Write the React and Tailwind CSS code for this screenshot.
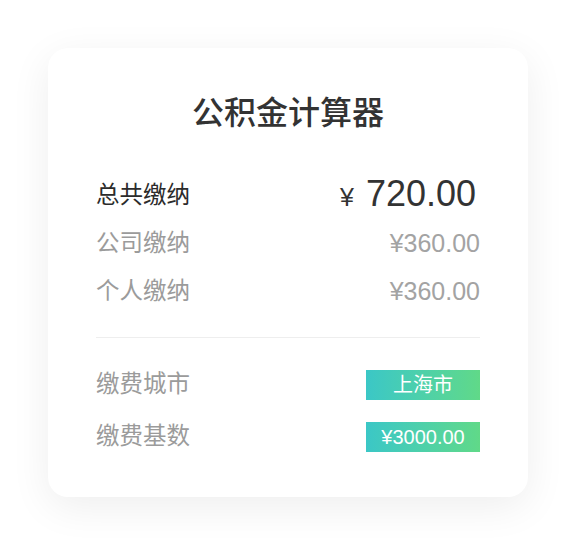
const rows = [
  { label: '公司缴纳', value: '¥360.00' },
  { label: '个人缴纳', value: '¥360.00' },
];

const settings = [
  { label: '缴费城市', value: '上海市' },
  { label: '缴费基数', value: '¥3000.00' },
];

export default function App() {
  return (
    <div
      className="w-[576px] h-[546px] bg-white pt-12 px-12"
      style={{ fontFamily: '"Liberation Sans", "Noto Sans CJK SC", sans-serif' }}
    >
      <div className="w-[480px] h-[449px] bg-white rounded-[20px] shadow-[0_10px_40px_rgba(0,0,0,0.07)] px-12 pt-[46px]">
        <h1 className="text-center text-[32px] leading-[38px] font-medium text-[#333]">公积金计算器</h1>

        <div className="mt-[40px]">
          <div className="h-[48px] flex items-center justify-between">
            <span className="text-[23.5px] text-[#2b2b2b]">总共缴纳</span>
            <span className="flex items-baseline text-[#333] pr-[4px]">
              <span className="text-[25px] mr-[12px]">¥</span>
              <span className="text-[36px] leading-none">720.00</span>
            </span>
          </div>
          {rows.map((r) => (
            <div key={r.label} className="h-[48px] flex items-center justify-between">
              <span className="text-[23.5px] text-[#9b9b9b]">{r.label}</span>
              <span className="text-[25px] text-[#a3a3a3]">{r.value}</span>
            </div>
          ))}
        </div>

        <div className="mt-[21px] h-px bg-[#eeeeee]" />

        <div className="mt-[21px]">
          {settings.map((s) => (
            <div key={s.label} className="h-[52px] flex items-center justify-between">
              <span className="text-[23.5px] text-[#9b9b9b]">{s.label}</span>
              <span className="w-[114px] h-[30px] flex items-center justify-center text-[20px] text-white bg-gradient-to-r from-[#3bc7c6] to-[#60d988]">
                {s.value}
              </span>
            </div>
          ))}
        </div>
      </div>
    </div>
  );
}
